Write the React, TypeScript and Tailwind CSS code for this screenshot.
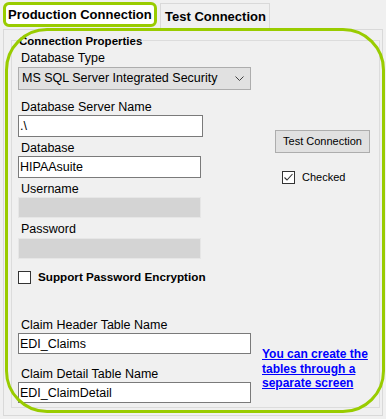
import React from "react";

const font = { fontFamily: '"Liberation Sans", Arial, sans-serif' };

function FieldLabel({ text, className = "" }: { text: string; className?: string }) {
  return <div className={`text-[12.5px] leading-[15px] pl-[3px] text-black ${className}`}>{text}</div>;
}

function TextBox({ value, width, disabled = false, className = "" }: { value: string; width: string; disabled?: boolean; className?: string }) {
  const look = disabled ? "bg-[#d4d4d4] border-[#e6e6e6]" : "bg-white border-[#7a7a7a]";
  return (
    <input
      readOnly
      value={value}
      disabled={disabled}
      className={`${width} ${look} ${className} border pl-[1px] text-[12.5px] text-black outline-none`}
    />
  );
}

function CheckBox({ checked, label, bold = false }: { checked: boolean; label: string; bold?: boolean }) {
  return (
    <div className="flex items-center h-[14px]">
      <span className="w-[13px] h-[13px] border border-[#333333] bg-white flex items-center justify-center shrink-0">
        {checked && (
          <svg width="11" height="11" viewBox="0 0 11 11">
            <path d="M1.5 5.5 L4 8 L9.5 2" fill="none" stroke="#333333" strokeWidth="1.1" />
          </svg>
        )}
      </span>
      <span className={bold ? "ml-[7px] text-[11.7px] font-bold text-black" : "ml-[7px] text-[11px] text-black"}>{label}</span>
    </div>
  );
}

export default function App() {
  return (
    <div className="w-[386px] h-[419px] bg-[#f0f0f0] relative overflow-hidden" style={font}>
      {/* Tabs */}
      <div className="h-[29px] flex items-start pl-[3px] pt-[2px]">
        <div className="w-[154px] h-[25px] rounded-[6px] border-[3px] border-[#99cc00] bg-white flex items-center pl-[2px] text-[13px] font-bold text-black">
          Production Connection
        </div>
        <div className="ml-[3px] mt-[1px] w-[110px] h-[26px] border border-b-0 border-[#d9d9d9] pl-[4px] pt-[5px] text-[13px] font-bold text-black leading-[15px]">
          Test Connection
        </div>
      </div>

      {/* Tab page */}
      <div className="ml-[3px] w-[380px] h-[387px] border border-[#d9d9d9] pt-[10px] pl-[7px] pr-[2px] pb-[7px]">
        <div className="relative h-full border border-[#dcdcdc]">
          <span className="absolute top-[-7px] left-[6px] px-[1px] bg-[#f0f0f0] text-[11.5px] leading-[14px] font-bold text-black">
            Connection Properties
          </span>

          <div className="flex pl-[6px]">
            {/* Left column */}
            <div className="w-[233px] flex flex-col">
              <FieldLabel text="Database Type" className="mt-[10px]" />
              <div className="mt-[1px] w-[233px] h-[23px] bg-[#e1e1e1] border border-[#adadad] flex items-center justify-between pl-[3px] pr-[6px] text-[12.5px] text-black">
                <span>MS SQL Server Integrated Security</span>
                <svg width="9" height="6" viewBox="0 0 9 6">
                  <path d="M0.5 0.5 L4.5 4.5 L8.5 0.5" fill="none" stroke="#404040" strokeWidth="1" />
                </svg>
              </div>

              <FieldLabel text="Database Server Name" className="mt-[10px]" />
              <TextBox value=".\" width="w-[185px]" className="h-[22px]" />

              <FieldLabel text="Database" className="mt-[4px]" />
              <TextBox value="HIPAAsuite" width="w-[183px]" className="h-[22px]" />

              <FieldLabel text="Username" className="mt-[4px]" />
              <TextBox value="" width="w-[183px]" disabled className="h-[21px]" />

              <FieldLabel text="Password" className="mt-[4px]" />
              <TextBox value="" width="w-[183px]" disabled className="mt-[1px] h-[21px]" />

              <div className="mt-[11px]">
                <CheckBox checked={false} label="Support Password Encryption" bold />
              </div>

              <FieldLabel text="Claim Header Table Name" className="mt-[34px]" />
              <TextBox value="EDI_Claims" width="w-[233px]" className="h-[21px]" />

              <FieldLabel text="Claim Detail Table Name" className="mt-[13px]" />
              <TextBox value="EDI_ClaimDetail" width="w-[233px]" className="h-[21px]" />
            </div>

            {/* Right column */}
            <div className="flex flex-col">
              <button className="ml-[24px] mt-[89px] w-[95px] h-[23px] bg-[#e1e1e1] border border-[#adadad] text-[11px] text-black">
                Test Connection
              </button>
              <div className="ml-[31px] mt-[17px]">
                <CheckBox checked label="Checked" />
              </div>
              <a className="ml-[11px] mt-[163px] text-[12px] leading-[14.5px] font-bold text-[#0000ff] underline">
                You can create the
                <br />
                tables through a
                <br />
                separate screen
              </a>
            </div>
          </div>
        </div>
      </div>

      {/* Highlight annotation */}
      <div className="absolute left-[5px] top-[28px] w-[380px] h-[385px] border-[3px] border-[#99cc00] rounded-[42px] pointer-events-none" />
    </div>
  );
}
